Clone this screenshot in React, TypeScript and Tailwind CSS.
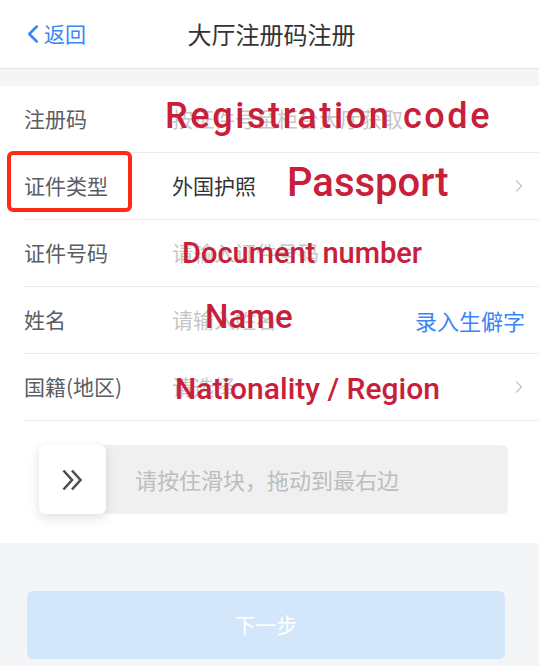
import { ChevronLeft, ChevronRight } from "lucide-react";

const cjk = "font-['Noto_Sans_CJK_SC','Noto_Sans',sans-serif]";
const note = "font-['Roboto','Liberation_Sans',sans-serif] font-medium text-[#c8203a] leading-none absolute whitespace-nowrap pointer-events-none";

const SliderArrows = () => (
  <svg width="24" height="24" viewBox="0 0 24 24" fill="none">
    <path d="M2.5 2.5 L11 12 L2.5 21.5" stroke="#4f4f4f" strokeWidth="2.6" />
    <path d="M11 2.5 L19.5 12 L11 21.5" stroke="#4f4f4f" strokeWidth="2.6" />
  </svg>
);

const Row = ({
  label,
  children,
  arrow,
  last,
}: {
  label: string;
  children?: React.ReactNode;
  arrow?: boolean;
  last?: boolean;
}) => (
  <div
    className={`relative ml-6 flex h-[67px] items-center pr-[14px] ${last ? "" : "border-b border-[#ececec]"}`}
  >
    <span className="w-[148px] shrink-0 text-[21px] text-[#5a5d63]">{label}</span>
    <div className="flex flex-1 items-center text-[21px]">{children}</div>
    {arrow && <ChevronRight className="-mr-1 h-[20px] w-[20px] text-[#c7c7cc]" strokeWidth={1.5} />}
  </div>
);

export default function App() {
  return (
    <div className={`min-h-[666px] w-full bg-[#f4f5f7] ${cjk}`}>
      <header className="relative flex h-[69px] items-center justify-center border-b border-[#e3e3e3] bg-white">
        <button className="absolute left-[18px] flex items-center text-[21px] text-[#3a86f4]">
          <ChevronLeft className="-mr-1 h-[30px] w-[30px]" strokeWidth={2} />
          返回
        </button>
        <h1 className="ml-1 text-[24px] text-[#333]">大厅注册码注册</h1>
      </header>

      <div className="h-[17px]" />

      <section className="bg-white pb-[29px]">
        <Row label="注册码">
          <span className="text-[#c6c6c6]">按证件号至柜台大厅获取</span>
          <span className={`${note} left-[141px] top-[12px] text-[36px] tracking-[2.6px]`}>
            Registration code
          </span>
        </Row>
        <Row label="证件类型" arrow>
          <span className="text-[#333]">外国护照</span>
          <div className="absolute -left-[17px] -top-[2px] h-[61px] w-[125px] rounded-md border-4 border-[#ff2a1a]" />
          <span className={`${note} left-[263px] top-[10px] text-[40px]`}>Passport</span>
        </Row>
        <Row label="证件号码">
          <span className="text-[#c6c6c6]">请输入证件号码</span>
          <span className={`${note} left-[158px] top-[19px] text-[29px]`}>Document number</span>
        </Row>
        <Row label="姓名">
          <span className="flex-1 text-[#c6c6c6]">请输入姓名</span>
          <span className="text-[22px] text-[#3a86f4]">录入生僻字</span>
          <span className={`${note} left-[181px] top-[13px] text-[33px]`}>Name</span>
        </Row>
        <Row label="国籍(地区)" arrow>
          <span className="text-[#c6c6c6]">请选择</span>
          <span className={`${note} left-[151px] top-[20px] text-[30px]`}>
            Nationality / Region
          </span>
        </Row>

        <div className="mx-[39px] mt-6 flex h-[69px] w-[469px] items-center rounded-md bg-[#f0f0f0]">
          <div className="flex h-[69px] w-[67px] items-center justify-center rounded-md bg-white shadow-[0_4px_12px_rgba(0,0,0,0.12)]">
            <SliderArrows />
          </div>
          <span className="ml-[29px] text-[22px] text-[#bdbdbd]">请按住滑块，拖动到最右边</span>
        </div>
      </section>

      <div className="pt-[48px] pb-2">
        <button className="ml-[27px] flex h-[68px] w-[478px] items-center justify-center rounded-md bg-[#d3e6fa] text-[21px] text-white">
          下一步
        </button>
      </div>
    </div>
  );
}
